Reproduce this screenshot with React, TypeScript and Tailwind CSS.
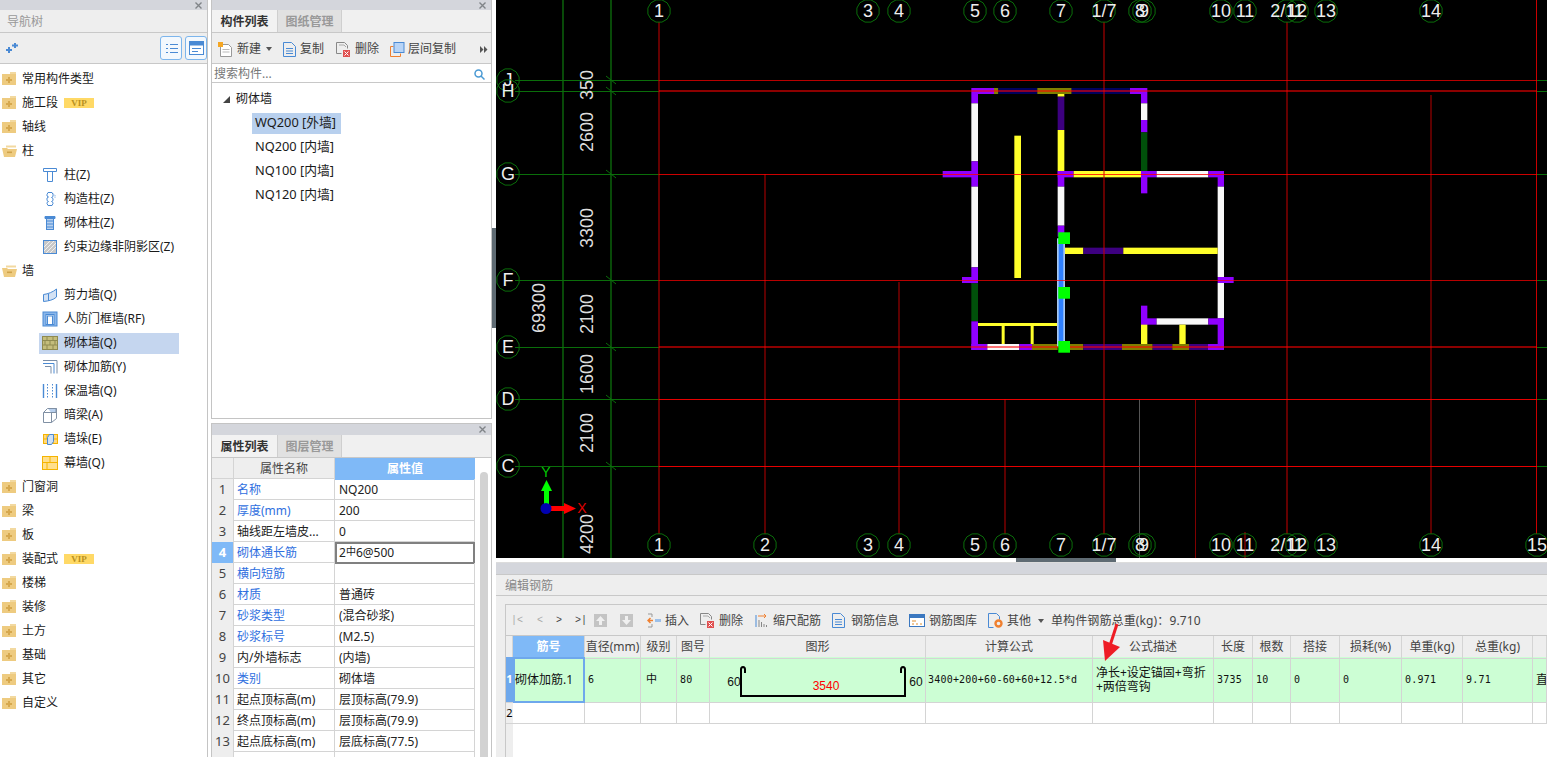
import type { ReactNode } from 'react'

const BLUE = '#4a8ad4'

function Folder({ open }: { open?: boolean }) {
  return (
    <svg width="15" height="14" viewBox="0 0 15 14" className="shrink-0">
      {open ? (
        <>
          <path d="M4 1.5h10v2H4z" fill="#f2d9a0" />
          <path d="M0 4h5l1 1h9l-2 8H2z" fill="#eecb80" />
          <rect x="5" y="7.5" width="5" height="1.6" fill="#d0a34a" />
        </>
      ) : (
        <>
          <path d="M8 0h6v2H8z" fill="#f2d9a0" />
          <rect x="0" y="2" width="14" height="11" fill="#eecb80" />
          <path d="M6 5h2v2h2v2H8v2H6V9H4V7h2z" fill="#d6a84e" />
        </>
      )}
    </svg>
  )
}

function Vip() {
  return (
    <span className="ml-[1px] flex h-[10px] w-[30px] items-center justify-center bg-[#ffd966] font-['Liberation_Serif',serif] text-[9px] font-bold leading-none text-[#b8901f]">
      VIP
    </span>
  )
}

function Leaf({ children }: { children: ReactNode }) {
  return (
    <svg width="16" height="16" viewBox="0 0 16 16" fill="none" stroke={BLUE} strokeWidth="1" className="shrink-0">
      {children}
    </svg>
  )
}

const leafIcons: Record<string, ReactNode> = {
  col: <Leaf><path d="M1.5 1.5h13v3h-13zM5.5 4.5v10h5v-10" /></Leaf>,
  gz: <Leaf><path d="M6 1.5h4l1 2v2l-1.500 1 1.500 1v2l-1.500 1 1.500 1v1l-1 2H6l-1-2v-1l1.500-1-1.500-1V7l1.500-1L5 5V3.500z" /><path d="M11 2.500l2 2v2" strokeDasharray="1 1" /></Leaf>,
  qt: <Leaf><path d="M3 1.5h10v2H3z" fill={BLUE} /><rect x="4.5" y="3.5" width="7" height="11" fill="#b8d0ee" /><path d="M4.5 6h7M4.5 9h7M4.5 12h7" /></Leaf>,
  ys: <Leaf><rect x="1.5" y="1.5" width="13" height="13" fill="#c8c8c8" /><path d="M2 8l6-6M2 12l10-10M4 14l10-10M8 14l6-6" stroke="#f0f0f0" /></Leaf>,
  jl: <Leaf><path d="M1.5 7.5C6 7 11 5 14.5 2v8c-3 3-8 4-13 4.5z" fill="#d4e2f4" /><path d="M6.5 7v7" /></Leaf>,
  rf: <Leaf><rect x="1" y="1" width="14" height="14" fill="#8ab6ea" /><rect x="4" y="3.5" width="8" height="10" fill="#e6f0fb" /><rect x="5.5" y="5" width="5" height="8.5" fill="#fff" /></Leaf>,
  qtq: (
    <svg width="16" height="14" viewBox="0 0 16 14" fill="none" stroke="#8f8a50" strokeWidth="1" className="shrink-0">
      <rect x="0.5" y="0.5" width="15" height="13" fill="#c4bd7c" />
      <path d="M0 4.5h16M0 9h16M5 0v4.5M11 0v4.5M3 4.5V9M8 4.5V9M13 4.5V9M5 9v5M11 9v5" />
    </svg>
  ),
  jj: (
    <svg width="16" height="16" viewBox="0 0 16 16" fill="none" strokeWidth="1" className="shrink-0">
      <path d="M1 1.5h14v13" stroke="#7a8ea8" />
      <path d="M1 4.5h11v10" stroke={BLUE} />
      <path d="M3 7.5h6v7" stroke="#7a8ea8" />
    </svg>
  ),
  bw: <Leaf><path d="M1.5 1v14M14.5 1v14" strokeWidth="1.4" /><path d="M5.5 1v14M10.5 1v14" strokeDasharray="1.5 1.5" /></Leaf>,
  al: (
    <svg width="16" height="16" viewBox="0 0 16 16" fill="none" stroke="#8090a4" strokeWidth="1" className="shrink-0">
      <path d="M1.5 5.5h8v10h-8zM1.5 5.5l4-4h9l-5 4M9.5 15.5l5-4v-10" />
      <path d="M6 1.5h8v4H9" fill="#b8d0ee" />
    </svg>
  ),
  qd: (
    <svg width="15" height="14" viewBox="0 0 15 14" fill="none" className="shrink-0">
      <rect x="0.5" y="2.5" width="14" height="9" fill="#ffd880" stroke="#f5b400" />
      <path d="M0 7h15M4 3v4M10 7v4" stroke="#f5b400" />
      <path d="M4.5 5.5l2-3h4v7l-2 3h-4z" fill="#cfe0f4" stroke={BLUE} />
    </svg>
  ),
  mq: (
    <svg width="16" height="14" viewBox="0 0 16 14" fill="none" stroke="#f5b400" strokeWidth="1" className="shrink-0">
      <rect x="0.5" y="0.5" width="15" height="13" fill="#ffdf8c" />
      <path d="M0 6.5h16M8 0v6.5M5 6.5v7" />
    </svg>
  ),
}

type NavRow = { label: string; open?: boolean; vip?: boolean; icon?: string; on?: boolean }

const navRows: NavRow[] = [
  { label: '常用构件类型' },
  { label: '施工段', vip: true },
  { label: '轴线' },
  { label: '柱', open: true },
  { label: '柱(Z)', icon: 'col' },
  { label: '构造柱(Z)', icon: 'gz' },
  { label: '砌体柱(Z)', icon: 'qt' },
  { label: '约束边缘非阴影区(Z)', icon: 'ys' },
  { label: '墙', open: true },
  { label: '剪力墙(Q)', icon: 'jl' },
  { label: '人防门框墙(RF)', icon: 'rf' },
  { label: '砌体墙(Q)', icon: 'qtq', on: true },
  { label: '砌体加筋(Y)', icon: 'jj' },
  { label: '保温墙(Q)', icon: 'bw' },
  { label: '暗梁(A)', icon: 'al' },
  { label: '墙垛(E)', icon: 'qd' },
  { label: '幕墙(Q)', icon: 'mq' },
  { label: '门窗洞' },
  { label: '梁' },
  { label: '板' },
  { label: '装配式', vip: true },
  { label: '楼梯' },
  { label: '装修' },
  { label: '土方' },
  { label: '基础' },
  { label: '其它' },
  { label: '自定义' },
]

function CloseStrip() {
  return (
    <div className="flex h-[10px] shrink-0 items-center justify-end bg-[#d4d6dc] pr-[5px]">
      <svg width="7" height="7" viewBox="0 0 7 7" stroke="#808488" strokeWidth="1.4">
        <path d="M0.5 0.5l6 6M6.5 0.5l-6 6" />
      </svg>
    </div>
  )
}

function NavPanel() {
  return (
    <div className="flex h-full w-[208px] shrink-0 flex-col border-r border-[#c4c4c4]">
      <CloseStrip />
      <div className="flex h-[23px] shrink-0 items-center border-b border-[#c8c8c8] bg-[#eeeeee] pl-[7px] pt-[2px] text-[#999]">导航树</div>
      <div className="flex h-[31px] shrink-0 items-center border-b border-[#c8c8c8] bg-[#eeeeee] pl-[5px]">
        <svg width="13" height="11" viewBox="0 0 13 11" fill={BLUE}>
          <path d="M3 4h2v2h2v2H5v2H3V8H1V6h2zM9 0h2v1.500h2v2h-2V5H9V3.500H7v-2h2z" />
        </svg>
        <div className="ml-auto flex gap-[3px]">
          <div className="flex h-[24px] w-[22px] items-center justify-center rounded-[3px] border border-[#7cb5ec] bg-[#f3f8fd]">
            <svg width="13" height="13" viewBox="0 0 13 13" fill="none" stroke="#4a8ad4">
              <path d="M1 2.5h2M1 6.5h2M1 10.5h2M5 2.5h8M5 6.5h8M5 10.5h8" />
            </svg>
          </div>
          <div className="flex h-[24px] w-[22px] items-center justify-center rounded-[3px] border border-[#7cb5ec] bg-[#f3f8fd]">
            <svg width="15" height="14" viewBox="0 0 15 14">
              <rect x="0.5" y="0.5" width="14" height="13" fill="#fff" stroke="#4a8ad4" />
              <rect x="0.5" y="0.5" width="14" height="4" fill="#4a8ad4" />
              <path d="M3 7.5h9M3 10.5h6" stroke="#4a8ad4" />
            </svg>
          </div>
        </div>
      </div>
      <div className="flex-1 bg-white pt-[3px] text-[#1a1a1a]">
        {navRows.map((r) =>
          r.icon ? (
            <div key={r.label} className="flex h-[24px] items-center">
              <div className={`ml-[39px] flex h-[21px] w-[140px] items-center gap-[6px] pl-[3px] ${r.on ? 'bg-[#c5d6ef]' : ''}`}>
                <span className="flex w-[16px] justify-center">{leafIcons[r.icon]}</span>
                <span>{r.label}</span>
              </div>
            </div>
          ) : (
            <div key={r.label} className="flex h-[24px] items-center gap-[5px] pl-[2px]">
              <Folder open={r.open} />
              <span>{r.label}</span>
              {r.vip && <Vip />}
            </div>
          ),
        )}
      </div>
    </div>
  )
}

function Tabs({ active, other }: { active: string; other: string }) {
  return (
    <div className="flex h-[23px] shrink-0 items-stretch border-b border-[#c8c8c8] bg-[#f0f0f0]">
      <div className="flex w-[65px] items-center justify-center bg-[#f2f2f2] pt-[2px] font-bold text-[#333]">{active}</div>
      <div className="flex w-[65px] items-center justify-center border-x border-[#cfcfcf] bg-[#e1e1e1] pt-[2px] font-bold text-[#999]">{other}</div>
    </div>
  )
}

function ToolBtn({ icon, label, className }: { icon: ReactNode; label: string; className: string }) {
  return (
    <div className={`flex items-center text-[#444] ${className}`}>
      {icon}
      <span>{label}</span>
    </div>
  )
}

function DocIcon({ className }: { className: string }) {
  return (
    <svg width="13" height="15" viewBox="0 0 13 15" fill="none" stroke="#4a8ad4" className={`shrink-0 ${className}`}>
      <path d="M0.5 0.5h8l4 4v10h-12zM3 6.5h7M3 9h7M3 11.5h7" />
    </svg>
  )
}

const delIcon = (
  <svg width="15" height="15" viewBox="0 0 15 15" fill="none" className="mr-[4px] shrink-0">
    <path d="M0.5 0.5h8l3 3v3M0.5 0.5v11h5" stroke="#888" />
    <path d="M3 3h5l2 2" stroke="#aaa" />
    <rect x="7" y="8" width="7" height="7" fill="#e05050" />
    <path d="M8.5 9.5l4 4M12.5 9.5l-4 4" stroke="#fff" />
  </svg>
)

function ListPanel() {
  return (
    <div className="flex h-[419px] shrink-0 flex-col border-x border-b border-[#c4c4c4]">
      <CloseStrip />
      <Tabs active="构件列表" other="图纸管理" />
      <div className="flex h-[31px] shrink-0 items-center border-b border-[#c8c8c8] bg-[#eeeeee] pt-[2px]">
        <ToolBtn
          className="ml-[6px] w-[46px]"
          label="新建"
          icon={
            <svg width="15" height="15" viewBox="0 0 15 15" fill="none" className="mr-[4px] shrink-0">
              <path d="M2.5 2.5h8l3 3v9h-11z" fill="#fff" stroke="#999" />
              <path d="M4.5 7.5h7M4.5 10h7" stroke="#bbb" />
              <rect x="0" y="0" width="5" height="5" fill="#f5a623" />
            </svg>
          }
        />
        <span className="ml-[2px] h-0 w-0 border-x-[3px] border-t-[4px] border-x-transparent border-t-[#555]" />
        <ToolBtn className="ml-[11px] w-[53px]" label="复制" icon={<DocIcon className="mr-[4px]" />} />
        <ToolBtn className="w-[54px]" label="删除" icon={delIcon} />
        <ToolBtn
          className="w-[80px]"
          label="层间复制"
          icon={
            <svg width="15" height="15" viewBox="0 0 15 15" fill="none" className="mr-[3px] shrink-0">
              <path d="M0.5 14.5v-10h3M0.5 14.5h10v-3" stroke="#f08030" />
              <rect x="4" y="0.5" width="10" height="10" fill="#b8d4f6" stroke="#4a8ad4" />
            </svg>
          }
        />
        <svg width="8" height="7" viewBox="0 0 8 7" fill="#555" className="ml-auto mr-[3px]">
          <path d="M0 0l3.5 3.5L0 7zM4 0l3.5 3.5L4 7z" />
        </svg>
      </div>
      <div className="flex h-[19px] shrink-0 items-center justify-between border-b border-[#c8c8c8] bg-white pl-[2px] pr-[6px] pt-[2px] text-[#777]">
        <span>搜索构件...</span>
        <svg width="11" height="11" viewBox="0 0 11 11" fill="none" stroke="#4a9ad4" strokeWidth="1.5">
          <circle cx="4.5" cy="4.5" r="3.5" />
          <path d="M7 7l3.5 3.5" />
        </svg>
      </div>
      <div className="flex-1 bg-white pt-[4px] text-[#1a1a1a]">
        <div className="flex h-[24px] items-center pl-[11px]">
          <svg width="7" height="7" viewBox="0 0 7 7" fill="#444" className="mr-[5px]">
            <path d="M7 0v7H0z" />
          </svg>
          <span className="ml-[1px]">砌体墙</span>
        </div>
        {['WQ200 [外墙]', 'NQ200 [内墙]', 'NQ100 [内墙]', 'NQ120 [内墙]'].map((t, i) => (
          <div key={t} className="flex h-[24px] items-center pl-[40px]">
            <span className={`flex h-[21px] items-center pl-[3px] pr-[5px] text-[12.8px] ${i === 0 ? 'bg-[#b8d0ee]' : ''}`}>{t}</span>
          </div>
        ))}
      </div>
    </div>
  )
}

type Prop = { name: string; value: ReactNode; blue?: boolean }

const props: Prop[] = [
  { name: '名称', value: 'NQ200', blue: true },
  { name: '厚度(mm)', value: '200', blue: true },
  { name: '轴线距左墙皮...', value: '0' },
  { name: '砌体通长筋', value: <>2<span className="relative -top-[2px] text-[10px]">中</span>6@500</>, blue: true },
  { name: '横向短筋', value: '', blue: true },
  { name: '材质', value: '普通砖', blue: true },
  { name: '砂浆类型', value: '(混合砂浆)', blue: true },
  { name: '砂浆标号', value: '(M2.5)', blue: true },
  { name: '内/外墙标志', value: '(内墙)' },
  { name: '类别', value: '砌体墙', blue: true },
  { name: '起点顶标高(m)', value: '层顶标高(79.9)' },
  { name: '终点顶标高(m)', value: '层顶标高(79.9)' },
  { name: '起点底标高(m)', value: '层底标高(77.5)' },
  { name: '', value: '' },
]

function PropPanel() {
  return (
    <div className="flex min-h-0 flex-1 flex-col overflow-hidden border-x border-[#c4c4c4]">
      <div className="border-t border-[#c4c4c4] bg-[#d4d6dc] pb-[1px]">
        <CloseStrip />
      </div>
      <Tabs active="属性列表" other="图层管理" />
      <div className="flex min-h-0 flex-1 bg-white">
        <div className="w-[263px] shrink-0">
          <div className="grid h-[21px] grid-cols-[22px_101px_140px] border-b border-[#d4d4d4] bg-[#eeeeee] text-center leading-[22px] text-[#444]">
            <span className="border-r border-[#d4d4d4]" />
            <span className="border-r border-[#d4d4d4]">属性名称</span>
            <span className="bg-[#7fb9f7] font-bold text-white">属性值</span>
          </div>
          {props.map((p, i) => (
            <div key={i} className="grid h-[21px] grid-cols-[22px_101px_140px] border-b border-[#d4d4d4] leading-[21px]">
              <span className={`border-r border-[#d4d4d4] text-center text-[13px] ${i === 3 ? 'bg-[#7fb9f7] font-bold text-white' : 'bg-[#eeeeee] text-[#444]'}`}>
                {p.name || p.value ? i + 1 : ''}
              </span>
              <span className={`truncate border-r border-[#d4d4d4] pl-[3px] ${p.blue ? 'text-[#2f6fe0]' : 'text-[#222]'}`}>{p.name}</span>
              {i === 3 ? (
                <span className="-mb-[1px] border-2 border-[#808080] pl-[2px] leading-[17px] text-[#222]">{p.value}</span>
              ) : (
                <span className="border-r border-[#d4d4d4] pl-[4px] text-[#222]">{p.value}</span>
              )}
            </div>
          ))}
        </div>
        <div className="flex-1 pt-[14px]">
          <div className="ml-[5px] h-full w-[8px] rounded-t-[4px] bg-[#d2d2d2]" />
        </div>
      </div>
    </div>
  )
}

const PURPLE = '#8f00ff'
const DPURPLE = '#3d0080'
const WHITE = '#f8f8f8'
const YELLOW = '#ffff2a'
const DGREEN = '#00500a'
const OLIVE = '#808000'
const NAVY = '#00005c'

// wall segments, in 3x coordinates of the plan (origin 930,80)
const walls: [number, number, number, number, string][] = [
  [124, 24, 68, 18, PURPLE], [192, 24, 13, 18, OLIVE], [205, 24, 117, 18, NAVY], [322, 24, 103, 18, OLIVE], [425, 24, 175, 18, NAVY], [600, 24, 52, 18, PURPLE],
  [124, 42, 20, 28, PURPLE], [124, 70, 20, 174, WHITE], [124, 244, 20, 76, PURPLE], [124, 320, 20, 242, WHITE], [124, 562, 20, 48, PURPLE], [124, 610, 20, 114, DGREEN], [124, 724, 20, 86, PURPLE],
  [38, 273, 106, 19, PURPLE], [96, 591, 48, 18, PURPLE],
  [253, 167, 20, 427, YELLOW],
  [383, 42, 20, 8, YELLOW], [383, 50, 20, 100, DPURPLE], [383, 150, 20, 123, YELLOW], [383, 273, 20, 47, PURPLE], [383, 320, 20, 117, WHITE], [383, 437, 20, 33, PURPLE],
  [633, 42, 19, 28, PURPLE], [633, 70, 19, 50, WHITE], [633, 120, 19, 37, PURPLE], [633, 157, 19, 116, DGREEN], [633, 273, 19, 67, PURPLE],
  [383, 273, 48, 19, PURPLE], [431, 273, 202, 19, YELLOW], [633, 273, 47, 19, PURPLE], [680, 273, 155, 19, WHITE], [835, 273, 47, 19, PURPLE],
  [863, 273, 19, 47, PURPLE], [863, 320, 19, 271, WHITE], [863, 591, 48, 18, PURPLE], [863, 609, 19, 106, WHITE], [863, 715, 19, 95, PURPLE],
  [405, 503, 55, 19, YELLOW], [460, 503, 120, 19, DPURPLE], [580, 503, 283, 19, YELLOW],
  [633, 677, 19, 57, PURPLE], [633, 715, 47, 19, PURPLE], [680, 715, 155, 19, WHITE], [835, 715, 47, 19, PURPLE],
  [633, 734, 19, 58, YELLOW], [748, 734, 19, 58, YELLOW],
  [144, 729, 237, 9, YELLOW], [215, 738, 9, 54, YELLOW], [302, 738, 9, 54, YELLOW],
  [124, 792, 48, 18, PURPLE], [172, 792, 96, 18, WHITE], [268, 792, 38, 18, PURPLE], [306, 792, 77, 18, OLIVE], [420, 792, 40, 18, OLIVE],
  [460, 792, 116, 18, DPURPLE], [576, 792, 92, 18, OLIVE], [668, 792, 59, 18, DPURPLE], [727, 792, 50, 18, OLIVE], [777, 792, 57, 18, DPURPLE], [834, 792, 48, 18, PURPLE],
]

const topAxes: [number, string][] = [
  [659, '1'], [868, '3'], [899, '4'], [975, '5'], [1005, '6'], [1061, '7'], [1104, '1/7'], [1140, '8'], [1144, '9'],
  [1221, '10'], [1245, '11'], [1287, '2/11'], [1297, '12'], [1326, '13'], [1431, '14'],
]
const bottomAxes: [number, string][] = [...topAxes, [765, '2'], [1537, '15']]
// y, label, red line opacity, red line width
const sideAxes: [number, string, number, number][] = [
  [80, 'J', 0.72, 1], [91, 'H', 0.55, 2], [174, 'G', 0.8, 1], [280, 'F', 0.72, 1], [347, 'E', 0.55, 2], [399, 'D', 0.9, 1], [466, 'C', 0.9, 1],
]
const dims: [number, number, string][] = [
  [587, 85, '350'], [587, 132, '2600'], [587, 228, '3300'], [587, 314, '2100'], [587, 374, '1600'], [587, 433, '2100'], [587, 534, '4200'], [539, 308, '69300'],
]

function bubble(cx: number, cy: number) {
  const pts = Array.from({ length: 12 }, (_, i) => {
    const a = (i * Math.PI) / 6 + Math.PI / 12
    return `${cx + 11.5 * Math.cos(a)},${cy + 11.5 * Math.sin(a)}`
  })
  return <polygon points={pts.join(' ')} fill="none" stroke="#0a6e0a" />
}

function Axis({ x, y, label }: { x: number; y: number; label: string }) {
  return (
    <g>
      {bubble(x, y)}
      <text x={x} y={y + 6} textAnchor="middle" fontSize="18" fill="#eee">{label}</text>
    </g>
  )
}

function Plan() {
  return (
    <svg width="1051" height="558" viewBox="496 0 1051 558" className="block bg-black font-['Liberation_Sans',sans-serif]">
      <path d="M563 0v558M611 0v558" stroke="#0a5c0a" strokeWidth="1.6" />
      {sideAxes.map(([y, l]) => (
        <g key={l}>
          <path d={`M515 ${y + 0.5}H659M1537 ${y + 0.5}H1547`} stroke="#0a6e0a" />
          <path d={`M606 ${y - 4}l10 8`} stroke="#0a6e0a" />
        </g>
      ))}
      <g transform="translate(930 80) scale(0.33333)">
        {walls.map(([x, y, w, h, c], i) => (
          <rect key={i} x={x} y={y} width={w} height={h} fill={c} />
        ))}
        <rect x="381" y="475" width="24" height="325" fill="#a8c8f0" />
        <rect x="386" y="475" width="14" height="325" fill="#2f80ff" />
      </g>
      <path d="M659 22V534M1104 22V534M1287 22V534M1536.5 0V534" stroke="#c80000" />
      <path d="M765 174V534M899 282V534M1005 399V534M1431 95V534M1245 532V558" stroke="#b80000" />
      <path d="M1195.5 400V558" stroke="#800000" />
      <path d="M1139.5 399V558" stroke="#555" />
      {sideAxes.map(([y, l, o, w]) => (
        <path key={l} d={`M659 ${w === 2 ? y : y + 0.5}H1537`} stroke="#ff0000" strokeOpacity={o} strokeWidth={w} />
      ))}
      {[232.3, 287, 341].map((y) => (
        <rect key={y} x="1058.3" y={y} width="11.700" height="11.700" fill="#00ff00" />
      ))}
      {sideAxes.map(([y, l]) => <Axis key={l} x={508} y={y} label={l} />)}
      {topAxes.map(([x, l]) => <Axis key={l} x={x} y={11} label={l} />)}
      {bottomAxes.map(([x, l]) => <Axis key={l} x={x} y={545} label={l} />)}
      {dims.map(([x, y, t]) => (
        <text key={t + y} transform={`translate(${x + 6} ${y}) rotate(-90)`} textAnchor="middle" fontSize="18" fill="#ddd">{t}</text>
      ))}
      <rect x="544" y="490" width="5" height="18" fill="#00ff00" />
      <path d="M546.5 480l5.500 11h-11z" fill="#00ff00" />
      <text x="546" y="477" textAnchor="middle" fontSize="14" fill="#00c800">Y</text>
      <rect x="546" y="506" width="19" height="5" fill="#ff0000" />
      <path d="M576 508.500l-12 5.500v-11z" fill="#ff0000" />
      <text x="582" y="513" textAnchor="middle" fontSize="14" fill="#e00000">X</text>
      <circle cx="546" cy="508.500" r="5.500" fill="#0000b0" />
    </svg>
  )
}

const rebarCols = 'grid-cols-[7px_72px_56px_36px_33px_216px_167px_121px_39px_38px_49px_62px_61px_70px_14px]'
const heads = ['直径(mm)', '级别', '图号', '图形', '计算公式', '公式描述', '长度', '根数', '搭接', '损耗(%)', '单重(kg)', '总重(kg)', '']
const cell = 'border-r border-b border-[#d4d4d4]'
const mono = "font-['DejaVu_Sans_Mono',monospace] text-[10px] tracking-[0.02em]"

function RebarShape() {
  return (
    <svg width="215" height="45" viewBox="710 657 215 45" className="block" fontFamily="'Liberation Sans', sans-serif">
      <path d="M745 673v-3.500q0-2.500-2-2.500t-2 2.500V696h164V669.500q0-2.500-2-2.500t-2 2.500v3.500" fill="none" stroke="#000" strokeWidth="2" />
      <text x="734" y="686" textAnchor="middle" fontSize="12" fill="#111">60</text>
      <text x="916" y="686" textAnchor="middle" fontSize="12" fill="#111">60</text>
      <text x="826" y="690" textAnchor="middle" fontSize="12" fill="#ff0000">3540</text>
    </svg>
  )
}

function RebarPanel() {
  return (
    <div className="relative flex min-h-0 flex-1 flex-col bg-white">
      <div className="h-[12px] shrink-0 border-t border-[#dcdcdc] bg-[#d4d6dc]" />
      <div className="flex h-[22px] shrink-0 items-center border-y border-[#c8c8c8] bg-[#eeeeee] pl-[9px] pt-[2px] text-[#888]">编辑钢筋</div>
      <div className="h-[8px] shrink-0 bg-[#eeeeee]" />
      <div className="flex min-h-0 flex-1">
        <div className="w-[9px] shrink-0 bg-[#eeeeee]" />
        <div className="min-w-0 flex-1 border-l border-t border-[#c8c8c8]">
          <div className="flex h-[30px] items-center bg-[#eeeeee] pt-[1px] text-[#444]">
            <span className="ml-[5px] flex w-[78px] gap-[13px] whitespace-nowrap font-['Liberation_Mono',monospace] text-[10px]">
              <span className="mr-[1px] text-[#aaa]">|&lt;</span>
              <span className="text-[#aaa]">&lt;</span>
              <span>&gt;</span>
              <span>&gt;|</span>
            </span>
            <svg width="13" height="13" viewBox="0 0 13 13" className="ml-[5px]">
              <rect width="13" height="13" fill="#c4c4c4" />
              <path d="M6.500 2l4.500 5H8v4H5V7H2z" fill="#f0f0f0" />
            </svg>
            <svg width="13" height="13" viewBox="0 0 13 13" className="ml-[13px]">
              <rect width="13" height="13" fill="#c4c4c4" />
              <path d="M6.500 11L2 6h3V2h3v4h3z" fill="#f0f0f0" />
            </svg>
            <ToolBtn
              className="ml-[14px] w-[53px]"
              label="插入"
              icon={
                <svg width="14" height="15" viewBox="0 0 14 15" fill="none" className="mr-[4px] shrink-0">
                  <path d="M1 1h4v3M1 14h4v-3" stroke="#999" />
                  <path d="M6 7.500H1M3.500 5L1 7.500 3.500 10" stroke="#f08030" strokeWidth="1.500" />
                  <rect x="8" y="6" width="6" height="3" fill="#9cc0ea" />
                </svg>
              }
            />
            <ToolBtn className="w-[55px]" label="删除" icon={delIcon} />
            <ToolBtn
              className="w-[77px]"
              label="缩尺配筋"
              icon={
                <svg width="14" height="14" viewBox="0 0 14 14" fill="none" className="mr-[4px] shrink-0">
                  <path d="M1 1v12" stroke="#4a8ad4" />
                  <path d="M3 2h8M9 0l2 2-2 2" stroke="#f08030" />
                  <path d="M4 6v7M6.500 8v5M9 10v3M11.500 11v2" stroke="#888" />
                </svg>
              }
            />
            <ToolBtn className="w-[77px]" label="钢筋信息" icon={<DocIcon className="mr-[6px]" />} />
            <ToolBtn
              className="w-[79px]"
              label="钢筋图库"
              icon={
                <svg width="16" height="13" viewBox="0 0 16 13" className="mr-[4px] shrink-0">
                  <rect x="0.500" y="0.500" width="15" height="12" fill="#fff" stroke="#3b78c0" />
                  <rect x="0.500" y="0.500" width="15" height="3.500" fill="#3b78c0" />
                  <path d="M3 7h4M3 10h2M7 10h2M11 10h2" stroke="#e09030" />
                </svg>
              }
            />
            <ToolBtn
              className="w-[50px]"
              label="其他"
              icon={
                <svg width="15" height="15" viewBox="0 0 15 15" fill="none" className="mr-[4px] shrink-0">
                  <path d="M0.500 0.500h8l3 3v3M0.500 0.500v14h5" stroke="#4a8ad4" />
                  <circle cx="10.500" cy="10.500" r="3" stroke="#f08030" strokeWidth="2.400" />
                </svg>
              }
            />
            <span className="h-0 w-0 border-x-[3px] border-t-[4px] border-x-transparent border-t-[#555]" />
            <span className="ml-[7px] tracking-[0.01em]">单构件钢筋总重(kg)：9.710</span>
          </div>
          <div className="border-t border-[#c8c8c8]">
            <div className={`grid h-[21px] ${rebarCols} bg-[#eeeeee] text-center leading-[22px] text-[#444]`}>
              <span className={cell} />
              <span className={`${cell} bg-[#7fb9f7] font-bold text-white`}>筋号</span>
              {heads.map((h, i) => (
                <span key={i} className={`${cell} whitespace-nowrap`}>{h}</span>
              ))}
            </div>
            <div className={`grid h-[46px] ${rebarCols} bg-[#ccfed4] text-[#111]`}>
              <span className="flex items-center justify-center border-b border-[#d4d4d4] bg-[#6ea8ec] text-[11px] font-bold text-white">1</span>
              <span className="flex items-center whitespace-nowrap border-2 border-[#6ea8ec]">砌体加筋.1</span>
              <span className={`${cell} ${mono} flex items-center pl-[3px]`}>6</span>
              <span className={`${cell} flex items-center pl-[5px] text-[11px]`}>中</span>
              <span className={`${cell} ${mono} flex items-center pl-[3px]`}>80</span>
              <span className={cell}><RebarShape /></span>
              <span className={`${cell} ${mono} flex items-center whitespace-nowrap pl-[2px]`}>3400+200+60-60+60+12.5*d</span>
              <span className={`${cell} flex items-center px-[3px] leading-[14px]`}>净长+设定锚固+弯折<br />+两倍弯钩</span>
              {['3735', '10', '0', '0', '0.971', '9.71'].map((v, i) => (
                <span key={i} className={`${cell} ${mono} flex items-center pl-[3px]`}>{v}</span>
              ))}
              <span className={`${cell} flex items-center overflow-hidden pl-[3px]`}>直</span>
            </div>
            <div className={`grid h-[21px] ${rebarCols}`}>
              <span className="border-b border-[#d4d4d4] bg-[#eeeeee] text-center text-[11px] leading-[20px]">2</span>
              {Array.from({ length: 14 }, (_, i) => <span key={i} className={cell} />)}
            </div>
          </div>
          <div className="h-[40px] w-[7px] bg-[#eeeeee]" />
        </div>
      </div>
      <svg width="24" height="42" viewBox="0 0 24 42" className="absolute left-[601px] top-[60px]">
        <path d="M20 2L13.500 22" stroke="#ee1c25" strokeWidth="3" />
        <path d="M8 39L6 18l17 7z" fill="#ee1c25" />
      </svg>
    </div>
  )
}

export default function App() {
  return (
    <div className="flex h-[757px] w-[1547px] overflow-hidden bg-white font-['Noto_Sans','Noto_Sans_CJK_SC',sans-serif] text-[12px]">
      <NavPanel />
      <div className="w-[3px] shrink-0" />
      <div className="flex w-[281px] shrink-0 flex-col">
        <ListPanel />
        <div className="h-[4px] shrink-0" />
        <PropPanel />
      </div>
      <div className="w-[4px] shrink-0 pt-[228px]">
        <div className="h-[100px] bg-[#5f6b73]" />
      </div>
      <div className="flex min-w-0 flex-1 flex-col">
        <Plan />
        <div className="h-[4px] shrink-0 pl-[520px]">
          <div className="h-full w-[100px] bg-[#5f6b73]" />
        </div>
        <RebarPanel />
      </div>
    </div>
  )
}
